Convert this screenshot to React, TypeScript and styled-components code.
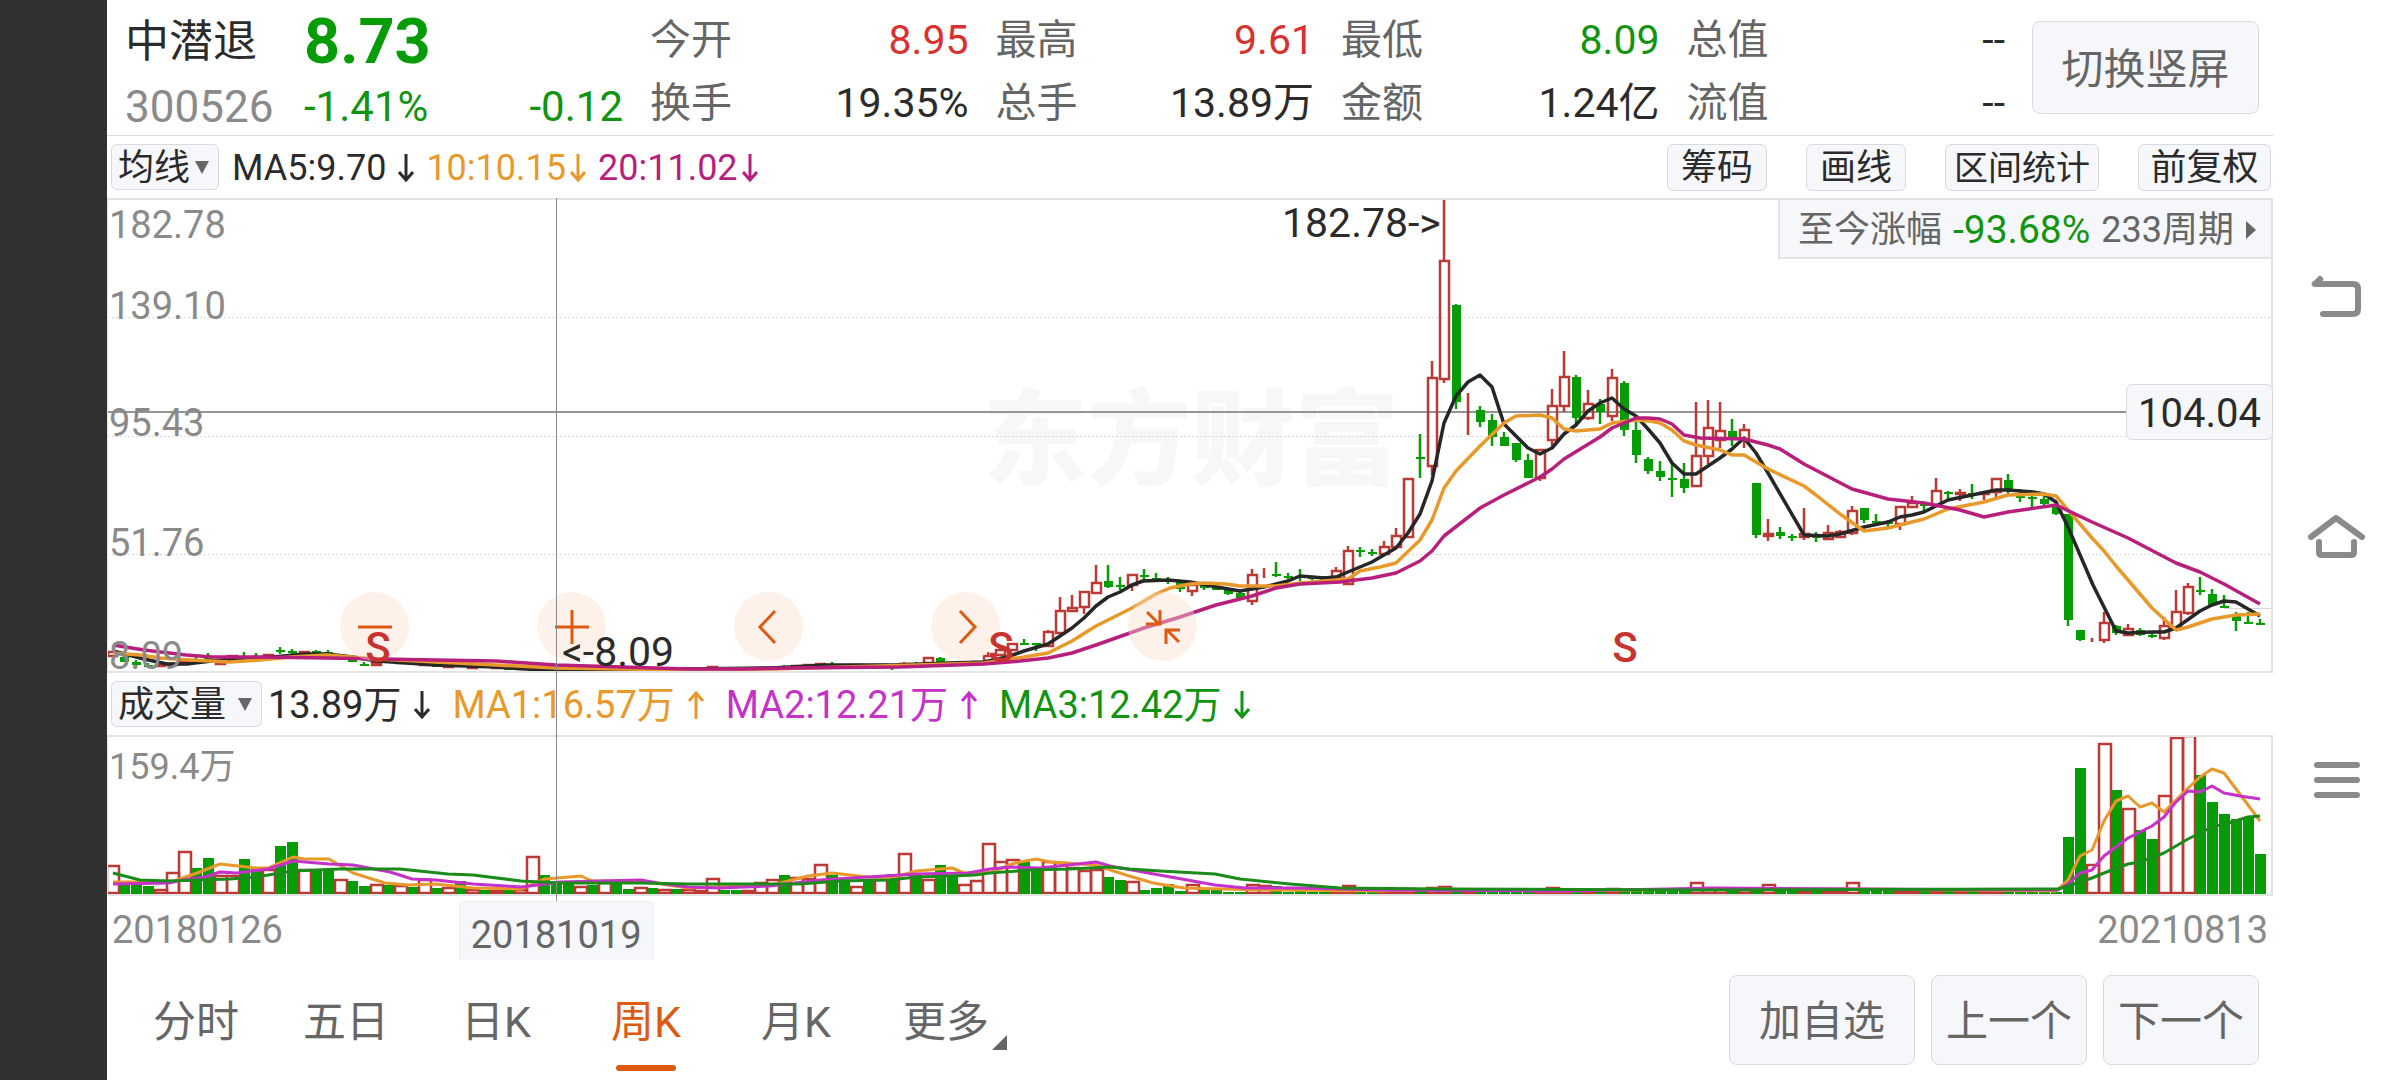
import React, { useState } from "react";
import styled, { createGlobalStyle } from "styled-components";

const color = {
  up: "#bb3a36",
  upText: "#d93030",
  down: "#059c05",
  downText: "#119411",
  ink: "#2b2b2b",
  label: "#666666",
  muted: "#8a8a8a",
  amber: "#e8992a",
  magenta: "#b81f7c",
  violet: "#c531c9",
  accent: "#dd5a12",
  panel: "#f6f7fa",
  edge: "#d9dbde",
  frame: "#e3e3e3",
};

const GlobalStyle = createGlobalStyle`
  *, *::before, *::after { box-sizing: border-box; }
  body {
    margin: 0;
    background: #ffffff;
    color: ${color.ink};
    font-family: Roboto, "Noto Sans CJK SC", sans-serif;
  }
  button, select { font: inherit; color: inherit; margin: 0; }
  dl, dd, dt, p { margin: 0; }
`;

/* ---------- data ---------- */

const FIRST_X = 112;
const STEP = 12;
const VIEW_X = 108;
const VIEW_W = 2163;
const xAt = (i: number) => FIRST_X + STEP * i;
const leftOf = (x: number) => `${((x - VIEW_X) / VIEW_W) * 100}%`;

type Candle = [up: 0 | 1, high: number, top: number, bottom: number, low: number];

const candles: Candle[] = [
  [1, 652, 652, 656, 656], [0, 655, 657, 662, 662], [0, 660, 662, 665, 667], [0, 663, 665, 666, 668],
  [1, 664, 665, 666, 667], [1, 662, 664, 665, 666], [1, 661, 662, 664, 665], [0, 657, 660, 661, 662],
  [0, 653, 658, 660, 662], [1, 662, 663, 664, 665], [1, 655, 656, 657, 658], [0, 652, 656, 657, 658],
  [0, 653, 656, 657, 659], [1, 654, 655, 656, 660], [0, 647, 650, 652, 654], [0, 649, 651, 653, 655],
  [1, 651, 652, 653, 654], [0, 650, 651, 652, 653], [0, 650, 652, 654, 655], [1, 655, 656, 657, 658],
  [0, 659, 660, 662, 662], [0, 662, 664, 665, 666], [1, 662, 663, 665, 665], [0, 659, 661, 662, 662],
  [1, 660, 661, 663, 663], [0, 662, 663, 664, 665], [1, 663, 664, 665, 665], [0, 664, 665, 666, 667],
  [1, 664, 666, 667, 667], [0, 663, 665, 666, 667], [1, 665, 667, 668, 668], [0, 665, 666, 667, 668],
  [1, 666, 667, 668, 668], [0, 667, 668, 669, 669], [1, 667, 668, 669, 669], [1, 666, 667, 668, 669],
  [0, 668, 670, 670, 671], [0, 668, 670, 671, 672], [0, 669, 670, 671, 671], [1, 669, 670, 671, 671],
  [0, 669, 670, 670, 671], [1, 668, 669, 670, 670], [0, 668, 669, 670, 670], [0, 668, 669, 670, 670],
  [1, 668, 669, 670, 670], [0, 668, 669, 670, 670], [1, 668, 669, 670, 670], [0, 668, 669, 670, 670],
  [1, 668, 669, 670, 670], [1, 668, 669, 670, 670], [1, 666, 667, 668, 669], [0, 667, 668, 669, 670],
  [0, 668, 669, 670, 670], [1, 668, 669, 670, 671], [1, 667, 668, 669, 669], [1, 667, 668, 669, 669],
  [0, 665, 667, 668, 668], [1, 665, 666, 667, 668], [1, 664, 665, 666, 667], [1, 663, 664, 665, 666],
  [0, 662, 664, 665, 666], [0, 664, 665, 666, 666], [1, 664, 665, 666, 667], [0, 664, 665, 666, 667],
  [1, 664, 665, 666, 667], [0, 664, 666, 667, 670], [1, 662, 664, 665, 666], [0, 662, 663, 664, 665],
  [1, 658, 658, 663, 664], [0, 657, 658, 663, 663], [0, 662, 663, 664, 665], [1, 662, 663, 664, 665],
  [1, 661, 662, 663, 664], [1, 652, 656, 661, 661], [1, 648, 650, 655, 655], [1, 644, 644, 650, 650],
  [0, 639, 643, 645, 645], [0, 643, 643, 645, 651], [1, 630, 632, 646, 646], [1, 597, 611, 633, 633],
  [1, 595, 608, 611, 611], [1, 592, 592, 607, 614], [1, 565, 583, 593, 593], [0, 565, 581, 587, 588],
  [0, 577, 585, 587, 590], [1, 575, 575, 585, 591], [0, 569, 575, 576, 580], [0, 573, 578, 581, 581],
  [0, 577, 579, 580, 584], [0, 582, 582, 589, 592], [1, 585, 585, 591, 596], [0, 585, 585, 588, 590],
  [0, 586, 587, 590, 590], [0, 589, 590, 594, 595], [0, 592, 593, 598, 600], [1, 569, 575, 601, 605],
  [1, 568, 575, 575, 578], [0, 562, 574, 576, 577], [0, 573, 576, 578, 579], [0, 569, 576, 578, 581],
  [0, 576, 577, 579, 580], [0, 576, 577, 580, 580], [1, 567, 571, 577, 577], [1, 546, 551, 584, 584],
  [0, 547, 550, 552, 557], [0, 549, 552, 554, 556], [1, 541, 547, 554, 554], [1, 528, 536, 547, 547],
  [1, 479, 479, 537, 537], [0, 434, 457, 459, 478], [1, 361, 378, 466, 475], [1, 200, 261, 379, 383],
  [0, 304, 305, 402, 409], [1, 393, 412, 412, 435], [0, 406, 410, 422, 427], [0, 414, 420, 437, 446],
  [0, 432, 437, 446, 446], [0, 443, 443, 460, 462], [0, 454, 460, 478, 478], [1, 450, 450, 478, 481],
  [1, 389, 406, 440, 446], [1, 351, 377, 406, 412], [0, 375, 377, 418, 424], [1, 390, 404, 418, 420],
  [0, 399, 404, 412, 424], [1, 369, 378, 416, 421], [0, 381, 383, 430, 436], [0, 422, 430, 455, 463],
  [0, 457, 459, 471, 474], [0, 461, 471, 477, 481], [0, 463, 478, 480, 497], [0, 463, 479, 488, 493],
  [1, 402, 456, 486, 486], [1, 400, 428, 456, 464], [1, 402, 431, 440, 448], [0, 419, 431, 438, 446],
  [1, 424, 430, 439, 448], [0, 483, 483, 535, 538], [1, 519, 534, 536, 541], [0, 527, 532, 536, 539],
  [0, 534, 536, 538, 541], [1, 508, 534, 537, 540], [0, 532, 536, 538, 542], [1, 525, 533, 539, 539],
  [1, 530, 532, 537, 537], [1, 506, 511, 533, 535], [0, 508, 508, 520, 523], [0, 514, 521, 523, 525],
  [0, 520, 522, 524, 528], [1, 506, 507, 524, 530], [1, 496, 503, 507, 507], [0, 503, 504, 506, 512],
  [1, 478, 491, 505, 505], [0, 491, 492, 494, 499], [1, 489, 493, 494, 501], [0, 484, 493, 495, 499],
  [1, 492, 493, 494, 500], [1, 478, 479, 492, 497], [0, 474, 480, 490, 495], [0, 489, 496, 498, 502],
  [0, 496, 497, 499, 507], [0, 495, 499, 504, 505], [0, 503, 506, 514, 515], [0, 514, 514, 620, 626],
  [0, 630, 630, 640, 641], [1, 638, 641, 641, 642], [1, 612, 623, 640, 643], [0, 625, 626, 633, 635],
  [1, 624, 629, 635, 635], [0, 628, 630, 635, 636], [0, 632, 635, 637, 638], [1, 617, 626, 638, 640],
  [1, 590, 612, 629, 629], [1, 583, 587, 613, 615], [0, 577, 590, 592, 595], [0, 589, 594, 605, 606],
  [0, 595, 606, 608, 608], [0, 612, 614, 621, 631], [0, 612, 622, 624, 624], [0, 619, 623, 625, 625],
];

const volumeBase = 894;
const volumes: number[] = [
  29, 9, 9, 8, 5, 22, 43, 26, 36, 19, 19, 35, 26, 25, 48, 52, 25, 24, 24, 15, 13, 8, 10, 9, 9, 7, 15, 6, 7, 13, 5, 4, 4, 4,
  5, 38, 19, 12, 10, 8, 9, 12, 10, 5, 7, 6, 5, 5, 5, 4, 16, 4, 4, 4, 12, 15, 19, 17, 16, 30, 19, 13, 8, 15, 18, 20, 41, 20,
  15, 29, 19, 10, 14, 51, 33, 35, 32, 24, 33, 32, 27, 24, 25, 17, 14, 13, 4, 6, 10, 3, 10, 4, 4, 2, 2, 10, 9, 8, 2, 3, 2, 2,
  4, 9, 2, 2, 3, 4, 6, 4, 7, 8, 6, 4, 4, 3, 3, 3, 3, 4, 7, 5, 4, 3, 3, 6, 4, 3, 3, 3, 3, 3, 12, 7, 6, 4, 5, 4, 10, 5, 4, 4,
  3, 3, 4, 12, 4, 3, 3, 4, 4, 3, 4, 3, 3, 3, 3, 3, 2, 2, 2, 2, 2, 57, 126, 30, 151, 104, 86, 64, 55, 99, 157, 159, 119, 92,
  80, 75, 77, 40,
];

const ma5 =
  "113,651 144,659 167,664 186,664 212,661 243,658 274,657 304,654 327,654 353,657 377,661 436,665 496,667 556,671 599,671 688,669 772,668 827,665 894,665 948,663 984,662 1007,657 1024,651 1048,644 1072,628 1084,618 1096,606 1108,597 1120,592 1132,585 1143,581 1168,580 1190,582 1217,587 1240,591 1264,587 1288,581 1300,576 1324,578 1336,577 1348,572 1372,562 1396,548 1408,533 1420,514 1432,481 1444,423 1456,396 1468,382 1480,375 1492,387 1504,424 1516,436 1528,448 1540,454 1552,448 1564,434 1576,425 1588,411 1600,403 1612,398 1624,409 1636,416 1648,429 1660,443 1672,463 1684,474 1696,474 1720,458 1732,449 1744,438 1756,453 1768,473 1804,535 1828,536 1840,534 1864,527 1888,522 1900,517 1912,515 1924,512 1948,500 1972,495 1996,490 2008,490 2033,492 2044,494 2056,502 2068,527 2093,585 2116,631 2128,633 2152,632 2164,632 2176,628 2200,611 2212,605 2224,601 2236,602 2248,609 2260,616";
const ma10 =
  "113,653 140,655 160,658 190,660 230,662 260,660 290,657 327,655 377,659 436,662 496,665 556,668 688,670 772,669 880,666 984,663 1010,659 1024,657 1048,653 1072,641 1096,626 1132,608 1156,594 1170,588 1190,584 1204,583 1226,584 1240,586 1276,586 1300,583 1348,579 1360,571 1380,567 1396,563 1420,540 1432,520 1444,488 1456,471 1480,446 1504,423 1516,416 1540,415 1552,418 1564,429 1576,431 1600,429 1612,423 1636,420 1650,421 1660,423 1672,430 1684,441 1696,445 1720,450 1732,455 1744,455 1768,469 1804,486 1816,495 1840,514 1864,531 1888,528 1924,519 1948,509 1984,502 2008,495 2044,494 2056,496 2092,538 2104,551 2116,566 2152,608 2176,630 2188,627 2212,619 2236,615 2260,614";
const ma20 =
  "113,645 144,650 186,655 212,657 256,657 327,658 436,660 496,661 556,665 688,669 740,669 792,668 900,667 984,664 1020,661 1048,658 1072,653 1096,645 1144,628 1180,617 1216,605 1252,596 1276,588 1300,584 1340,582 1372,578 1396,573 1420,561 1432,551 1444,536 1480,508 1504,495 1528,483 1540,477 1552,469 1564,459 1600,437 1612,428 1636,418 1648,418 1660,419 1672,424 1684,435 1700,438 1744,439 1768,445 1780,449 1804,464 1852,489 1888,499 1924,503 1960,510 1984,517 2008,512 2056,505 2092,522 2128,538 2176,563 2200,572 2224,584 2260,604";

const volMa1 =
  "113,882 140,882 174,881 197,873 220,864 256,868 268,868 293,857 304,859 329,859 353,873 385,883 408,885 436,884 473,888 521,889 545,879 581,876 592,881 641,881 688,888 772,885 808,876 832,873 868,877 892,878 916,871 952,868 964,873 992,872 1015,863 1036,859 1050,862 1095,865 1126,875 1153,883 1184,888 1260,890 1380,891 1440,889 1560,891 1700,889 1860,889 2056,891 2068,880 2080,856 2092,850 2104,821 2116,801 2128,796 2140,807 2152,803 2164,812 2187,789 2200,777 2212,769 2224,773 2260,821";
const volMa2 =
  "113,884 169,883 182,880 205,877 220,872 236,873 268,869 293,861 329,864 353,865 390,872 412,879 436,880 473,884 522,887 560,882 641,880 658,883 688,887 720,888 770,886 820,880 868,877 916,874 968,873 990,869 1010,867 1040,868 1096,862 1110,866 1165,876 1215,885 1245,888 1300,888 1380,890 1560,891 1720,888 1860,889 2058,890 2068,884 2080,873 2092,870 2104,856 2128,838 2152,826 2164,817 2175,803 2188,791 2200,792 2212,786 2224,793 2240,796 2260,799";
const volMa3 =
  "113,873 140,880 169,881 230,879 256,877 293,871 340,869 400,869 448,874 473,875 521,881 560,883 641,883 688,884 760,884 800,884 840,881 890,880 916,877 952,876 975,875 990,873 1030,870 1070,869 1110,867 1130,869 1160,871 1215,874 1240,879 1290,884 1340,888 1440,889 1700,890 2058,889 2068,886 2092,878 2104,873 2128,864 2140,862 2164,853 2188,839 2212,827 2232,822 2248,817 2260,816";

const stats = [
  { label: "今开", value: "8.95", tone: color.upText },
  { label: "最高", value: "9.61", tone: color.upText },
  { label: "最低", value: "8.09", tone: color.downText },
  { label: "总值", value: "--", tone: color.ink },
  { label: "换手", value: "19.35%", tone: color.ink },
  { label: "总手", value: "13.89万", tone: color.ink },
  { label: "金额", value: "1.24亿", tone: color.ink },
  { label: "流值", value: "--", tone: color.ink },
];

const priceTicks = [
  { text: "182.78", y: 225 },
  { text: "139.10", y: 306 },
  { text: "95.43", y: 423 },
  { text: "51.76", y: 543 },
  { text: "8.09", y: 656 },
];

/* ---------- layout ---------- */

const Screen = styled.div`
  display: grid;
  grid-template-columns: 107px minmax(0, 1fr) 127px;
  min-height: 100vh;
`;

const Notch = styled.div`
  background: #303030;
`;

const Main = styled.main`
  display: flex;
  flex-direction: column;
  min-width: 0;
`;

const Header = styled.header`
  display: flex;
  align-items: flex-start;
  gap: 27px;
  height: 136px;
  padding: 0 14px 0 18px;
  border-bottom: 1px solid ${color.edge};
`;

const Quote = styled.div`
  display: grid;
  grid-template-columns: 179px 1fr auto;
  grid-template-rows: 78px 52px;
  align-items: center;
  flex: none;
  width: 498px;
  padding-top: 3px;
`;

const Name = styled.h1`
  margin: 0;
  font-size: 44px;
  line-height: 52px;
  font-weight: 400;
`;

const Price = styled.strong`
  grid-column: 2 / 4;
  font-size: 63px;
  line-height: 64px;
  font-weight: 700;
  color: ${color.down};
`;

const Figure = styled.span<{ $tone: string; $size?: number }>`
  font-size: ${(p) => p.$size ?? 42}px;
  line-height: 52px;
  color: ${(p) => p.$tone};
`;

const Stats = styled.dl`
  display: grid;
  flex: 1;
  grid-template-columns: repeat(4, minmax(0, 1fr));
  column-gap: 27px;
  grid-auto-rows: 63px;
  padding-top: 8px;
`;

const Stat = styled.div`
  display: flex;
  justify-content: space-between;
  align-items: center;
  font-size: 41px;
  line-height: 52px;
  white-space: nowrap;

  dt { color: ${color.label}; }
`;

const PanelButton = styled.button<{ $w: number; $h: number }>`
  flex: none;
  width: ${(p) => p.$w}px;
  height: ${(p) => p.$h}px;
  padding: 4px 0 0;
  border: 1px solid ${color.edge};
  border-radius: 8px;
  background: ${color.panel};
  color: ${color.label};
  font-size: 42px;
  line-height: 52px;
  white-space: nowrap;
`;

const SwitchWrap = styled.div`
  padding-top: 21px;
`;

const Charts = styled.section`
  position: relative;
`;

const Toolbar = styled.div`
  display: flex;
  align-items: center;
  height: 62px;
  padding: 0 2px 0 4px;
  white-space: nowrap;
`;

const Picker = styled.label<{ $w: number }>`
  display: grid;
  grid-template-columns: 1fr 14px;
  align-items: center;
  width: ${(p) => p.$w}px;
  height: 46px;
  padding: 0 9px 0 0;
  border: 1px solid ${color.edge};
  border-radius: 6px;
  background: ${color.panel};

  select {
    grid-area: 1 / 1 / 2 / 3;
    width: 100%;
    height: 44px;
    padding: 2px 0 0 6px;
    border: 0;
    background: transparent;
    appearance: none;
    font-size: 36px;
    line-height: 42px;
  }
  svg { grid-area: 1 / 2; pointer-events: none; }
`;

const Readouts = styled.div<{ $size: number; $gap: number; $indent: number }>`
  display: flex;
  gap: ${(p) => p.$gap}px;
  flex: 1;
  padding: 2px 0 0 ${(p) => p.$indent}px;
  font-size: ${(p) => p.$size}px;
  line-height: 46px;
`;

const Readout = styled.span<{ $tone: string; $gap: number }>`
  display: inline-flex;
  align-items: center;
  gap: ${(p) => p.$gap}px;
  color: ${(p) => p.$tone};
`;

const Tools = styled.div`
  display: flex;
  gap: 39px;
`;

const ToolButton = styled.button<{ $w: number; $dense?: boolean }>`
  width: ${(p) => p.$w}px;
  height: 47px;
  padding: 2px 0 0;
  border: 1px solid ${color.edge};
  border-radius: 6px;
  background: ${color.panel};
  font-size: ${(p) => (p.$dense ? 34 : 36)}px;
  line-height: 43px;
`;

const Frame = styled.div<{ $h: number }>`
  position: relative;
  height: ${(p) => p.$h}px;
  border: 2px solid ${color.frame};
  border-left-width: 1px;
`;

const Plot = styled.svg`
  position: relative;
  display: block;
  width: 100%;
  height: 100%;
`;

const Watermark = styled.div`
  position: absolute;
  top: 157px;
  font-family: "Noto Sans CJK SC", sans-serif;
  font-size: 104px;
  line-height: 150px;
  font-weight: 900;
  color: #f7f7f7;
`;

const Layer = styled.div`
  position: absolute;
  inset: 0;
`;

const AxisLabel = styled.span<{ $size?: number }>`
  position: absolute;
  left: 1px;
  margin-top: -22px;
  font-size: ${(p) => p.$size ?? 38}px;
  line-height: 44px;
  color: ${color.muted};
`;

const Note = styled.span`
  position: absolute;
  margin-top: -24px;
  font-size: 41px;
  line-height: 48px;
`;

const Signal = styled.b`
  position: absolute;
  top: 424px;
  width: 40px;
  margin-left: -20px;
  text-align: center;
  font-size: 42px;
  line-height: 48px;
  font-weight: 500;
  color: #c9332f;
`;

const Summary = styled.button`
  position: absolute;
  top: 0;
  right: -2px;
  display: flex;
  align-items: center;
  height: 59px;
  padding: 2px 15px 0 18px;
  border: 2px solid ${color.frame};
  border-top: 0;
  background: ${color.panel};
  color: ${color.label};
  font-size: 36px;
  line-height: 46px;
  white-space: nowrap;

  em {
    margin: 0 11px;
    font-style: normal;
    font-size: 39px;
    color: ${color.downText};
  }
  svg { margin-left: 12px; }
`;

const PriceTag = styled.output`
  position: absolute;
  top: 184px;
  right: -2px;
  width: 147px;
  height: 56px;
  border: 1px solid ${color.edge};
  border-radius: 6px;
  background: ${color.panel};
  text-align: center;
  font-size: 40px;
  line-height: 58px;
`;

const Controls = styled.div`
  position: absolute;
  left: 232px;
  top: 392px;
  display: flex;
  gap: 128px;
`;

const RoundButton = styled.button`
  display: grid;
  place-items: center;
  width: 69px;
  height: 69px;
  padding: 0;
  border: 0;
  border-radius: 50%;
  background: rgba(252, 222, 206, 0.42);
`;

const CrossLine = styled.div`
  position: absolute;
  top: 62px;
  bottom: 59px;
  width: 1px;
  background: ${color.muted};
`;

const Dates = styled.div`
  display: flex;
  justify-content: space-between;
  height: 64px;
  padding: 0 5px;
  font-size: 38px;
  line-height: 68px;
  color: ${color.muted};
`;

const DateTag = styled.output`
  position: absolute;
  bottom: 0;
  width: 195px;
  height: 59px;
  margin-left: -97px;
  border: 1px solid #eceef0;
  border-bottom: 0;
  border-radius: 6px 6px 0 0;
  background: ${color.panel};
  text-align: center;
  font-size: 38px;
  line-height: 66px;
  color: ${color.label};
`;

const Footer = styled.footer`
  display: flex;
  justify-content: space-between;
  align-items: center;
  height: 120px;
  padding: 0 14px;
`;

const Tabs = styled.nav`
  display: flex;
`;

const Tab = styled.button<{ $active: boolean }>`
  position: relative;
  width: 150px;
  height: 120px;
  padding: 4px 0 0;
  border: 0;
  background: transparent;
  font-size: 43px;
  line-height: 52px;
  color: ${(p) => (p.$active ? color.accent : color.label)};

  &::after {
    content: "";
    position: absolute;
    left: 45px;
    bottom: 9px;
    width: 60px;
    height: 6px;
    border-radius: 3px;
    background: ${(p) => (p.$active ? color.accent : "transparent")};
  }
  svg { position: absolute; right: 14px; bottom: 30px; }
`;

const Actions = styled.div`
  display: flex;
  gap: 16px;
`;

const SystemNav = styled.nav`
  display: flex;
  flex-direction: column;
  justify-content: center;
`;

const NavButton = styled.button`
  display: grid;
  place-items: center;
  height: 240px;
  padding: 0;
  border: 0;
  background: transparent;
`;

/* ---------- drawings ---------- */

const Arrow = ({ up }: { up?: boolean }) => (
  <svg width="16" height="30" viewBox="0 0 16 30" fill="none" stroke="currentColor" strokeWidth="3" aria-hidden="true">
    {up ? <path d="M8 29V3M1 11L8 3L15 11" /> : <path d="M8 1V27M1 19L8 27L15 19" />}
  </svg>
);

const Caret = () => (
  <svg width="14" height="13" viewBox="0 0 14 13" aria-hidden="true">
    <path d="M0 0H14L7 13Z" fill={color.label} />
  </svg>
);

const CandleMark = ({ i, c }: { i: number; c: Candle }) => {
  const [up, high, top, bottom, low] = c;
  const x = xAt(i);
  const stroke = up ? color.up : color.down;
  return (
    <g stroke={stroke} strokeWidth="2.5" fill="none">
      {high < top && <path d={`M${x} ${high}V${top}`} />}
      {low > bottom && <path d={`M${x} ${bottom}V${low}`} />}
      {up ? (
        <rect x={x - 4} y={top} width="9" height={bottom - top} />
      ) : (
        <rect x={x - 4} y={top} width="9" height={Math.max(2, bottom - top)} fill={stroke} stroke="none" />
      )}
    </g>
  );
};

const PriceChart = () => (
  <Plot viewBox={`${VIEW_X} 200 ${VIEW_W} 471`} preserveAspectRatio="none" role="img" aria-label="周K线">
    <g stroke="#dadada" strokeWidth="1" strokeDasharray="2 2">
      {[317.5, 436.5, 554.5].map((y) => (
        <path key={y} d={`M108 ${y}H2271`} />
      ))}
    </g>
    <path d="M2224 608.5H2271" stroke="#d6d6d6" />
    <path d="M108 412H2130" stroke="#959595" strokeWidth="2" />
    {candles.map((c, i) => (
      <CandleMark key={i} i={i} c={c} />
    ))}
    <g fill="none" strokeWidth="3.5" strokeLinejoin="round">
      <polyline points={ma5} stroke="#262626" />
      <polyline points={ma10} stroke={color.amber} />
      <polyline points={ma20} stroke={color.magenta} />
    </g>
  </Plot>
);

const VolumeChart = () => (
  <Plot viewBox={`${VIEW_X} 737 ${VIEW_W} 157`} preserveAspectRatio="none" role="img" aria-label="成交量">
    {volumes.map((h, i) => {
      const x = xAt(i);
      const up = candles[i][0] === 1;
      const y = volumeBase - h;
      return up ? (
        <rect key={i} x={x - 5} y={y + 1} width="12" height={Math.max(0, h - 2)} fill="none" stroke={color.up} strokeWidth="2.5" />
      ) : (
        <rect key={i} x={x - 5} y={y} width="11" height={h} fill={color.down} />
      );
    })}
    <g fill="none" strokeWidth="3" strokeLinejoin="round">
      <polyline points={volMa1} stroke={color.amber} />
      <polyline points={volMa2} stroke={color.violet} />
      <polyline points={volMa3} stroke="#1b8c1b" />
    </g>
  </Plot>
);

const controlIcons = [
  { label: "缩小", d: "M3 20H37" },
  { label: "放大", d: "M3 20H37M20 3V37" },
  { label: "左移", d: "M26 4L11 20L26 36" },
  { label: "右移", d: "M14 4L29 20L14 36" },
  { label: "收起", d: "M4 5L16 17M17 3V17H3M36 35L24 23M23 37V23H37" },
];

const tabs = ["分时", "五日", "日K", "周K", "月K", "更多"];

export default function App() {
  const [tab, setTab] = useState("周K");
  return (
    <>
      <GlobalStyle />
      <Screen>
        <Notch />
        <Main>
          <Header>
            <Quote>
              <Name>中潜退</Name>
              <Price>8.73</Price>
              <Figure $tone={color.muted} $size={44}>300526</Figure>
              <Figure $tone={color.downText}>-1.41%</Figure>
              <Figure $tone={color.downText}>-0.12</Figure>
            </Quote>
            <Stats>
              {stats.map((s) => (
                <Stat key={s.label}>
                  <dt>{s.label}</dt>
                  <dd style={{ color: s.tone }}>{s.value}</dd>
                </Stat>
              ))}
            </Stats>
            <SwitchWrap>
              <PanelButton $w={227} $h={93}>切换竖屏</PanelButton>
            </SwitchWrap>
          </Header>

          <Charts>
            <Toolbar>
              <Picker $w={108}>
                <select aria-label="均线指标" defaultValue="均线">
                  <option>均线</option>
                </select>
                <Caret />
              </Picker>
              <Readouts $size={36} $gap={12} $indent={13}>
                <Readout $tone={color.ink} $gap={12}>MA5:9.70 <Arrow /></Readout>
                <Readout $tone={color.amber} $gap={4}>10:10.15 <Arrow /></Readout>
                <Readout $tone={color.magenta} $gap={4}>20:11.02 <Arrow /></Readout>
              </Readouts>
              <Tools>
                <ToolButton $w={100}>筹码</ToolButton>
                <ToolButton $w={100}>画线</ToolButton>
                <ToolButton $w={154} $dense>区间统计</ToolButton>
                <ToolButton $w={133}>前复权</ToolButton>
              </Tools>
            </Toolbar>

            <Frame $h={475}>
              <Watermark style={{ left: leftOf(983) }}>东方财富</Watermark>
              <PriceChart />
              <Layer>
                {priceTicks.map((t) => (
                  <AxisLabel key={t.text} style={{ top: t.y - 200 }}>{t.text}</AxisLabel>
                ))}
                <Controls>
                  {controlIcons.map((c) => (
                    <RoundButton key={c.label} aria-label={c.label}>
                      <svg width="40" height="40" viewBox="0 0 40 40" fill="none" stroke={color.accent} strokeWidth="3">
                        <path d={c.d} />
                      </svg>
                    </RoundButton>
                  ))}
                </Controls>
                <Note style={{ left: leftOf(1282), top: 23 }}>182.78-&gt;</Note>
                <Note style={{ left: leftOf(562), top: 452 }}>&lt;-8.09</Note>
                {[378, 1001, 1625].map((x) => (
                  <Signal key={x} style={{ left: leftOf(x) }}>S</Signal>
                ))}
                <PriceTag>104.04</PriceTag>
                <Summary>
                  至今涨幅<em>-93.68%</em>233周期
                  <svg width="10" height="18" viewBox="0 0 10 18" aria-hidden="true">
                    <path d="M0 0L10 9L0 18Z" fill={color.label} />
                  </svg>
                </Summary>
              </Layer>
            </Frame>

            <Toolbar>
              <Picker $w={151}>
                <select aria-label="副图指标" defaultValue="成交量">
                  <option>成交量</option>
                </select>
                <Caret />
              </Picker>
              <Readouts $size={38} $gap={22} $indent={6}>
                <Readout $tone={color.ink} $gap={13}>13.89万 <Arrow /></Readout>
                <Readout $tone={color.amber} $gap={13}>MA1:16.57万 <Arrow up /></Readout>
                <Readout $tone={color.violet} $gap={13}>MA2:12.21万 <Arrow up /></Readout>
                <Readout $tone={color.downText} $gap={13}>MA3:12.42万 <Arrow /></Readout>
              </Readouts>
            </Toolbar>

            <Frame $h={161}>
              <VolumeChart />
              <AxisLabel $size={36} style={{ top: 30 }}>159.4万</AxisLabel>
            </Frame>

            <Dates>
              <time>20180126</time>
              <time>20210813</time>
            </Dates>
            <DateTag style={{ left: leftOf(556) }}>20181019</DateTag>
            <CrossLine style={{ left: leftOf(556) }} />
          </Charts>

          <Footer>
            <Tabs>
              {tabs.map((t) => (
                <Tab key={t} $active={t === tab} onClick={() => setTab(t)}>
                  {t}
                  {t === "更多" && (
                    <svg width="15" height="15" viewBox="0 0 15 15" aria-hidden="true">
                      <path d="M15 0V15H0Z" fill={color.label} />
                    </svg>
                  )}
                </Tab>
              ))}
            </Tabs>
            <Actions>
              <PanelButton $w={186} $h={90}>加自选</PanelButton>
              <PanelButton $w={156} $h={90}>上一个</PanelButton>
              <PanelButton $w={156} $h={90}>下一个</PanelButton>
            </Actions>
          </Footer>
        </Main>

        <SystemNav aria-label="系统导航">
          <NavButton aria-label="返回">
            <svg width="60" height="60" viewBox="0 0 60 60" fill="none" stroke={color.muted} strokeWidth="6" strokeLinecap="round" strokeLinejoin="round">
              <path d="M8 14H46Q51 14 51 19V39Q51 44 46 44H16" />
              <path d="M6 14L13 7L15 9L12 14Z" fill={color.muted} strokeWidth="3" />
            </svg>
          </NavButton>
          <NavButton aria-label="主页">
            <svg width="60" height="60" viewBox="0 0 60 60" fill="none" stroke={color.muted} strokeWidth="6" strokeLinecap="round" strokeLinejoin="round">
              <path d="M4 27L29 8L55 27" />
              <path d="M12 32V42Q12 45 15 45H44Q47 45 47 42V32" />
            </svg>
          </NavButton>
          <NavButton aria-label="菜单">
            <svg width="60" height="60" viewBox="0 0 60 60" fill="none" stroke={color.muted} strokeWidth="6" strokeLinecap="round">
              <path d="M10 15H50M10 30H50M10 45H50" />
            </svg>
          </NavButton>
        </SystemNav>
      </Screen>
    </>
  );
}
